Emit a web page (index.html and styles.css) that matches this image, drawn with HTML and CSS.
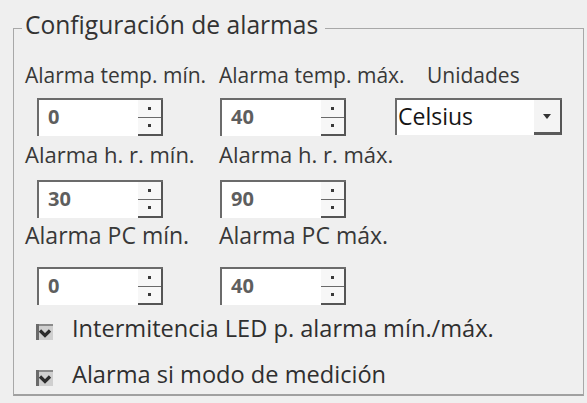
FILE: index.html
```html
<!DOCTYPE html>
<html lang="es">
<head>
<meta charset="utf-8">
<title>Configuración de alarmas</title>
<link rel="stylesheet" href="styles.css">
</head>
<body>
<fieldset class="group">
  <legend class="group-title">Configuración de alarmas</legend>
  <div class="grid">
    <div class="label">Alarma temp. mín.</div>
    <div class="label">Alarma temp. máx.</div>
    <div class="label label-units">Unidades</div>

    <div class="spin spin-first"><span class="spin-value">0</span><span class="spin-btns"><span class="spin-btn"></span><span class="spin-btn spin-btn-down"></span></span></div>
    <div class="spin"><span class="spin-value">40</span><span class="spin-btns"><span class="spin-btn"></span><span class="spin-btn spin-btn-down"></span></span></div>
    <div class="combo"><span class="combo-value">Celsius</span><span class="combo-btn"><span class="combo-arrow"></span></span></div>

    <div class="label label-r2">Alarma h. r. mín.</div>
    <div class="label label-r2">Alarma h. r. máx.</div>
    <div></div>

    <div class="spin spin-first"><span class="spin-value">30</span><span class="spin-btns"><span class="spin-btn"></span><span class="spin-btn spin-btn-down"></span></span></div>
    <div class="spin"><span class="spin-value">90</span><span class="spin-btns"><span class="spin-btn"></span><span class="spin-btn spin-btn-down"></span></span></div>
    <div></div>

    <div class="label label-r3">Alarma PC mín.</div>
    <div class="label label-r3">Alarma PC máx.</div>
    <div></div>

    <div class="spin spin-first"><span class="spin-value">0</span><span class="spin-btns"><span class="spin-btn"></span><span class="spin-btn spin-btn-down"></span></span></div>
    <div class="spin"><span class="spin-value">40</span><span class="spin-btns"><span class="spin-btn"></span><span class="spin-btn spin-btn-down"></span></span></div>
    <div></div>
  </div>

  <div class="checks">
    <div class="check">
      <svg class="check-box" viewBox="0 0 17 16" width="17" height="16" aria-hidden="true">
        <rect x="0" y="0" width="17" height="16" fill="#cfcfcf"/>
        <rect x="0" y="0" width="17" height="2" fill="#8a8a8a"/>
        <rect x="0" y="0" width="3" height="16" fill="#6a6a6a"/>
        <path d="M4 6.5 L9 11.5 L14 6.5" fill="none" stroke="#2c2c2c" stroke-width="3.2" stroke-linejoin="miter"/>
      </svg>
      <span class="check-text">Intermitencia LED p. alarma mín./máx.</span>
    </div>
    <div class="check">
      <svg class="check-box" viewBox="0 0 17 16" width="17" height="16" aria-hidden="true">
        <rect x="0" y="0" width="17" height="16" fill="#cfcfcf"/>
        <rect x="0" y="0" width="17" height="2" fill="#8a8a8a"/>
        <rect x="0" y="0" width="3" height="16" fill="#6a6a6a"/>
        <path d="M4 6.5 L9 11.5 L14 6.5" fill="none" stroke="#2c2c2c" stroke-width="3.2" stroke-linejoin="miter"/>
      </svg>
      <span class="check-text">Alarma si modo de medición</span>
    </div>
  </div>
</fieldset>
</body>
</html>
```

FILE: styles.css
```css
html, body {
  margin: 0;
  padding: 0;
  background: #efefef;
}

body {
  padding: 12px 0 0 13px;
  font-family: "Open Sans", "Noto Sans", "DejaVu Sans", sans-serif;
  color: #383838;
}

.group {
  box-sizing: border-box;
  width: 571px;
  margin: 0;
  padding: 0 0 6px 11px;
  border: 1px solid #a8a8a8;
  border-bottom: 2px solid #a0a0a0;
  min-width: 0;
}

.group-title {
  margin-left: -3px;
  padding: 0 7px 6px 3px;
  font-size: 24.6px;
  line-height: 26px;
  color: #333333;
}

.grid {
  display: grid;
  grid-template-columns: 194px 176px 1fr;
  grid-template-rows: 35px 44px 38px 43px 44px 38px;
  margin-top: 19px;
  align-items: start;
}

.label {
  font-size: 21px;
  line-height: 24px;
  white-space: nowrap;
}

.label-r2 {
  font-size: 22px;
}

.label-r3 {
  font-size: 23px;
}

.label-units {
  margin-left: 32px;
}

.spin {
  box-sizing: border-box;
  width: 126px;
  height: 38px;
  margin-left: 1px;
  display: flex;
  background: #ffffff;
  border-top: 2px solid #6b6b6b;
  border-left: 2px solid #6b6b6b;
}

.spin-first {
  margin-left: 12px;
}

.spin-value {
  flex: 1;
  padding-left: 9px;
  font-size: 20px;
  font-weight: 700;
  line-height: 34px;
  color: #5e5e5e;
}

.spin-btns {
  box-sizing: border-box;
  width: 25px;
  display: flex;
  flex-direction: column;
  background: #f7f7f7;
  border-right: 2px solid #555555;
  border-bottom: 2px solid #555555;
}

.spin-btn {
  flex: 1;
  display: flex;
  align-items: center;
  justify-content: center;
}

.spin-btn::after {
  content: "";
  width: 3px;
  height: 3px;
  background: #3a3a3a;
}

.spin-btn-down {
  border-top: 1px solid #6a6a6a;
}

.combo {
  box-sizing: border-box;
  width: 167px;
  height: 37px;
  display: flex;
  background: #ffffff;
  border-top: 2px solid #6b6b6b;
  border-left: 2px solid #6b6b6b;
}

.combo-value {
  flex: 1;
  padding-left: 1px;
  font-size: 23px;
  line-height: 32px;
  color: #151515;
}

.combo-btn {
  box-sizing: border-box;
  width: 28px;
  display: flex;
  align-items: center;
  justify-content: center;
  background: #f4f4f4;
  border-right: 2px solid #555555;
  border-bottom: 3px solid #5a5a5a;
}

.combo-arrow {
  width: 0;
  height: 0;
  border-left: 4px solid transparent;
  border-right: 4px solid transparent;
  border-top: 5px solid #333333;
}

.checks {
  margin-top: 9px;
  display: flex;
  flex-direction: column;
  gap: 18px;
}

.check {
  display: flex;
  align-items: flex-start;
  padding-left: 11px;
}

.check-box {
  flex: none;
  margin-top: 10px;
}

.check-text {
  margin-left: 19px;
  font-size: 23.6px;
  line-height: 28px;
  color: #2f2f2f;
  white-space: nowrap;
}
```
